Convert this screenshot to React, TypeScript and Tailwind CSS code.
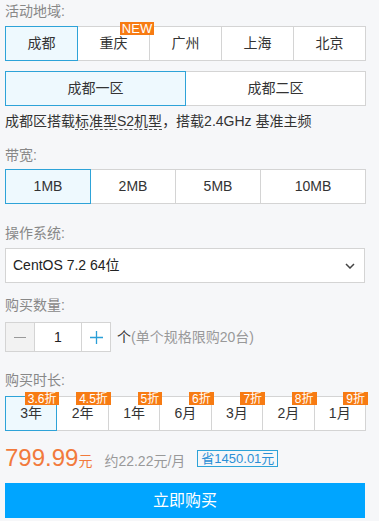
import React from "react";

const font = { fontFamily: '"Liberation Sans", "Noto Sans CJK SC", sans-serif' };

function Seg({ items, sel, widths, badges, newIdx }: { items: string[]; sel: number; widths?: string[]; badges?: string[]; newIdx?: number }) {
  return (
    <div className="flex h-[35px] w-[361px]">
      {items.map((t, i) => (
        <div
          key={t}
          className={`relative flex items-center justify-center border text-[14px] text-[#333] ${i > 0 ? "-ml-px" : ""} ${
            i === sel ? "z-10 border-[#2ea3d8] bg-[#eef9fe]" : "border-[#d4d4d4] bg-white"
          } ${widths ? widths[i] : "flex-1"}`}
        >
          {t}
          {badges && (
            <span className="absolute right-[-3px] top-[-5px] z-20 flex h-[13px] items-center bg-[#f77b13] px-[3px] text-[12px] leading-none text-white">
              {badges[i]}
            </span>
          )}
          {newIdx === i && (
            <span className="absolute right-[-5px] top-[-5px] z-20 flex h-[13px] w-[34px] items-center justify-center bg-[#f77b13] text-[13px] leading-none text-white">
              NEW
            </span>
          )}
        </div>
      ))}
    </div>
  );
}

function Label({ children, className }: { children: React.ReactNode; className?: string }) {
  return <div className={`h-[20px] text-[14px] leading-[20px] text-[#888] ${className ?? ""}`}>{children}</div>;
}

export default function App() {
  return (
    <div className="min-h-[521px] w-[379px] bg-[#f6f7f9] pl-[5px] pt-px" style={font}>
      <Label>活动地域:</Label>
      <div className="mt-[5px]">
        <Seg items={["成都", "重庆", "广州", "上海", "北京"]} sel={0} newIdx={1} />
      </div>
      <div className="mt-[10px]">
        <Seg items={["成都一区", "成都二区"]} sel={0} />
      </div>
      <div className="mt-[5px] h-[20px] text-[14px] leading-[20px] text-[#333]">
        成都区搭载<span className="border-b border-dashed border-[#555]">标准型S2机型</span>，搭载2.4GHz 基准主频
      </div>
      <Label className="mt-[14px]">带宽:</Label>
      <div className="mt-[4px]">
        <Seg
          items={["1MB", "2MB", "5MB", "10MB"]}
          sel={0}
          widths={["w-[86px]", "w-[86px]", "w-[86px]", "w-[106px]"]}
        />
      </div>
      <Label className="mt-[19px]">操作系统:</Label>
      <div className="mt-[5px] flex h-[35px] w-[360px] items-center justify-between border border-[#d4d4d4] bg-white pl-[7px] pr-[9px] text-[14px] text-[#222]">
        <span>CentOS 7.2 64位</span>
        <svg width="10" height="6" viewBox="0 0 10 6" fill="none">
          <path d="M1 1l4 4 4-4" stroke="#444" strokeWidth="1.5" />
        </svg>
      </div>
      <Label className="mt-[12px]">购买数量:</Label>
      <div className="mt-[7px] flex items-center">
        <div className="flex h-[30px]">
          <div className="flex w-[30px] items-center justify-center border border-[#d4d4d4] bg-[#f2f2f2]">
            <div className="h-px w-[12px] bg-[#999]" />
          </div>
          <div className="-ml-px flex w-[48px] items-center justify-center border border-[#d4d4d4] bg-white text-[14px] text-[#222]">1</div>
          <div className="-ml-px flex w-[30px] items-center justify-center border border-[#d4d4d4] bg-white">
            <svg width="13" height="13" viewBox="0 0 13 13">
              <path d="M6.5 0v13M0 6.5h13" stroke="#2a9fd8" strokeWidth="1.3" />
            </svg>
          </div>
        </div>
        <span className="ml-[6px] text-[14px] text-[#333]">个</span>
        <span className="text-[14px] text-[#999]">(单个规格限购20台)</span>
      </div>
      <Label className="mt-[18px]">购买时长:</Label>
      <div className="mt-[6px]">
        <Seg
          items={["3年", "2年", "1年", "6月", "3月", "2月", "1月"]}
          sel={0}
          badges={["3.6折", "4.5折", "5折", "6折", "7折", "8折", "9折"]}
        />
      </div>
      <div className="mt-[12px] flex h-[30px] items-baseline leading-[30px]">
        <span className="text-[24px] text-[#f27a3c]">799.99</span>
        <span className="text-[14px] text-[#f27a3c]">元</span>
        <span className="ml-[12px] text-[14px] text-[#999]">约22.22元/月</span>
        <span className="ml-[12px] inline-block h-[17px] self-center border border-[#2ea3d8] px-[3px] text-[13px] leading-[15px] text-[#2b8fd6]">
          省1450.01元
        </span>
      </div>
      <div className="mt-[10px] flex h-[35px] w-[360px] items-center justify-center bg-[#00a5ff] text-[16px] text-white">立即购买</div>
    </div>
  );
}
